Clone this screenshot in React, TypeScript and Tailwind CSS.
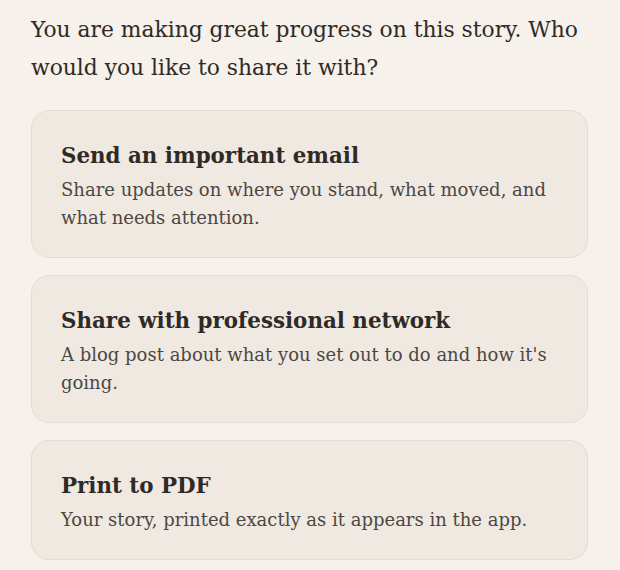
const options = [
  {
    title: 'Send an important email',
    body: 'Share updates on where you stand, what moved, and what needs attention.',
  },
  {
    title: 'Share with professional network',
    body: "A blog post about what you set out to do and how it's going.",
  },
  {
    title: 'Print to PDF',
    body: 'Your story, printed exactly as it appears in the app.',
  },
];

export default function App() {
  return (
    <div className="min-h-[570px] w-[620px] bg-[#f6f1ea] pl-[31px] pr-[32px] pt-[11px] font-['DejaVu_Serif',serif]">
      <p className="text-[21.8px] leading-[38px] text-[#2f2a26]">
        You are making great progress on this story. Who would you like to share it with?
      </p>

      <div className="mt-[23px] flex flex-col gap-[17px]">
        {options.map((o) => (
          <button
            key={o.title}
            className="rounded-[18px] border border-[#e3dccf] bg-[#efe9e2] px-[29px] pt-[25px] pb-[25px] text-left"
          >
            <h3 className="text-[21.4px] font-bold leading-[40px] text-[#2f2a26]">{o.title}</h3>
            <p className="text-[18px] leading-[28px] text-[#4d4742]">{o.body}</p>
          </button>
        ))}
      </div>
    </div>
  );
}
